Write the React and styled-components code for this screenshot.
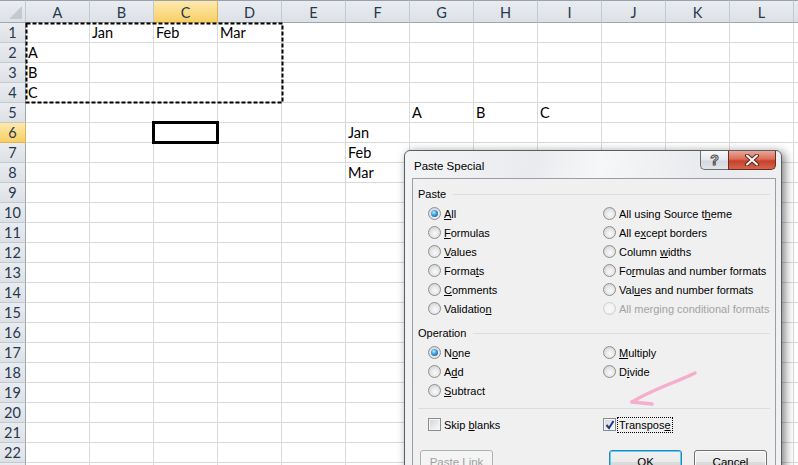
import React from 'react';
import styled, { createGlobalStyle, css } from 'styled-components';

const GlobalStyle = createGlobalStyle`
  html, body { margin: 0; padding: 0; background: #fff; }
  body { width: 798px; height: 465px; overflow: hidden; }
`;

const COLS = ['A', 'B', 'C', 'D', 'E', 'F', 'G', 'H', 'I', 'J', 'K', 'L', 'M'];
const ROW_COUNT = 23;

const cells = {
    B1: 'Jan', C1: 'Feb', D1: 'Mar',
    A2: 'A', A3: 'B', A4: 'C',
    G5: 'A', H5: 'B', I5: 'C',
    F6: 'Jan', F7: 'Feb', F8: 'Mar',
};

const Page = styled.div`
    position: relative;
    width: 798px;
    height: 465px;
    overflow: hidden;
    background: #fff;
`;

const Sheet = styled.div`
    display: grid;
    grid-template-columns: 26px repeat(13, 64px);
    grid-template-rows: 23px repeat(${ROW_COUNT}, 20px);
    font-family: Lato, "Liberation Sans", sans-serif;
    font-size: 14.5px;
    color: #000;
`;

const headBase = css`
    box-sizing: border-box;
    background: linear-gradient(#e9ecf0, #dde1e6);
    color: #27384d;
    border-right: 1px solid #c3c8cf;
    border-bottom: 1px solid #c3c8cf;
    text-align: center;
    overflow: hidden;
`;

const activeHead = css`
    background: linear-gradient(#fde9ad, #f8cf67);
    border-right-color: #e2b552;
    border-bottom-color: #e2b552;
`;

const Corner = styled.div`
    ${headBase};
    position: relative;
    border-top: 1px solid #9aa1a9;
    border-bottom-color: #9ea6b0;
    &::after {
        content: '';
        position: absolute;
        right: 3px;
        bottom: 3px;
        width: 0;
        height: 0;
        border-left: 13px solid transparent;
        border-bottom: 13px solid #c4c9cf;
    }
`;

const ColHead = styled.div`
    ${headBase};
    border-top: 1px solid #9aa1a9;
    border-bottom-color: #9ea6b0;
    line-height: 21px;
    padding-top: 1px;
    ${(p) => p.$active && activeHead};
`;

const RowHead = styled.div`
    ${headBase};
    line-height: 19px;
    border-right-color: #9ea6b0;
    ${(p) => p.$active && activeHead};
`;

const Cell = styled.div`
    box-sizing: border-box;
    border-right: 1px solid #d9d9d9;
    border-bottom: 1px solid #d9d9d9;
    line-height: 19px;
    padding-left: 2px;
    white-space: nowrap;
    overflow: hidden;
`;

const Marquee = styled.svg`
    position: absolute;
    left: 25px;
    top: 22px;
`;

const ActiveCell = styled.div`
    position: absolute;
    left: 152px;
    top: 121px;
    width: 67px;
    height: 23px;
    box-sizing: border-box;
    border: 3px solid #000;
`;

/* ---- dialog ---- */

const Dialog = styled.div`
    position: absolute;
    left: 404px;
    top: 150px;
    width: 378px;
    height: 340px;
    box-sizing: border-box;
    border: 1px solid #5a5d62;
    border-radius: 6px 6px 0 0;
    background: linear-gradient(100deg, #f3f4f6 0%, #e9ebee 30%, #f6f7f8 45%, #e8eaed 70%, #f1f2f4 100%);
    box-shadow: 3px 2px 10px rgba(0, 0, 0, 0.5);
    padding: 0 5px 0 7px;
    font-family: "Liberation Sans", Arial, sans-serif;
    font-size: 11px;
    color: #000;
`;

const TitleBar = styled.div`
    display: flex;
    justify-content: space-between;
    align-items: flex-start;
    height: 27px;
`;

const Title = styled.div`
    font-size: 11.5px;
    padding: 9px 0 0 2px;
`;

const Caption = styled.div`
    display: flex;
`;

const CaptionButton = styled.div`
    box-sizing: border-box;
    height: 19px;
    display: flex;
    align-items: center;
    justify-content: center;
    border: 1px solid #6b6e73;
    border-top: none;
    ${(p) => p.$close ? css`
        width: 48px;
        border-radius: 0 0 5px 0;
        border-color: #6e2b20;
        background: linear-gradient(#e9a799 0%, #dc6d58 45%, #c7412a 55%, #d3644d 100%);
    ` : css`
        width: 28px;
        border-right: none;
        border-radius: 0 0 0 5px;
        background: linear-gradient(#f8f9fa 0%, #e6e8ec 50%, #d4d8de 55%, #e2e5e9 100%);
    `}
`;

const HelpGlyph = styled.span`
    font-family: "Liberation Sans", sans-serif;
    font-weight: bold;
    font-size: 14px;
    color: #fff;
    -webkit-text-stroke: 1px #4a4d52;
    line-height: 1;
`;

const Client = styled.div`
    box-sizing: border-box;
    height: 320px;
    border: 1px solid #9b9fa5;
    border-bottom: none;
    background: #f0f0f0;
    padding: 6px 5px 0 5px;
`;

const GroupTitle = styled.div`
    display: flex;
    align-items: center;
    gap: 7px;
    height: 18px;
    margin-top: ${(p) => p.$gap || 0}px;
    &::after {
        content: '';
        flex: 1;
        height: 1px;
        background: #d5dfe5;
    }
`;

const OptionGrid = styled.div`
    display: grid;
    grid-template-columns: 175px 1fr;
    grid-auto-rows: 19px;
    padding-left: 10px;
    margin-top: 1px;
`;

const Option = styled.div`
    display: flex;
    align-items: center;
    gap: 3px;
    grid-column: ${(p) => p.$col};
    grid-row: ${(p) => p.$row};
`;

const Radio = styled.span`
    position: relative;
    box-sizing: border-box;
    width: 13px;
    height: 13px;
    border-radius: 50%;
    border: 1px solid ${(p) => (p.$disabled ? '#cfd0d2' : '#8d8f92')};
    background: ${(p) => (p.$disabled
        ? 'radial-gradient(circle, #f6f6f6 40%, #e6e6e6 100%)'
        : 'radial-gradient(circle at 55% 60%, #fbfbfb 0%, #ececec 35%, #c8c9cb 100%)')};
    ${(p) => p.$checked && css`
        &::after {
            content: '';
            position: absolute;
            left: 2px;
            top: 2px;
            width: 7px;
            height: 7px;
            border-radius: 50%;
            background: radial-gradient(circle at 40% 35%, #b9ecff 0%, #3a9ae0 45%, #0f4d8c 100%);
        }
    `}
`;

const Check = styled.span`
    position: relative;
    box-sizing: border-box;
    width: 13px;
    height: 13px;
    border: 1px solid #8a8c8f;
    background: linear-gradient(135deg, #d2d3d5 0%, #f0f0f0 70%, #ffffff 100%);
    box-shadow: inset 0 0 0 1px #f4f4f4;
    display: flex;
    align-items: center;
    justify-content: center;
`;

const OptLabel = styled.span`
    color: ${(p) => (p.$disabled ? '#a3a3a3' : '#000')};
    white-space: nowrap;
    padding: 1px;
    border: 1px dotted ${(p) => (p.$focus ? '#000' : 'transparent')};
    margin-left: -2px;
    u { text-decoration-thickness: 1px; text-underline-offset: 1px; }
`;

const Rule = styled.div`
    height: 1px;
    background: #d5dfe5;
    margin: 8px 0 0;
`;

const CheckRow = styled(OptionGrid)`
    margin-top: 6px;
`;

const ButtonRow = styled.div`
    display: flex;
    gap: 12px;
    padding: 0 3px 0 2px;
    margin-top: 16px;
`;

const Spacer = styled.div`
    flex: 1;
`;

const Button = styled.div`
    box-sizing: border-box;
    width: 73px;
    height: 23px;
    border-radius: 3px;
    display: flex;
    align-items: center;
    justify-content: center;
    font-size: 11.5px;
    ${(p) => p.$disabled ? css`
        border: 1px solid #adb2b5;
        background: #f4f4f4;
        color: #a0a0a0;
    ` : css`
        border: 1px solid ${p.$default ? '#3c7fb1' : '#707070'};
        background: linear-gradient(#f2f2f2 0%, #ebebeb 50%, #dddddd 51%, #cfcfcf 100%);
        box-shadow: inset 0 0 0 1px ${p.$default ? '#48d5fb' : '#fcfcfc'};
        color: #000;
    `}
`;

const Arrow = styled.svg`
    position: absolute;
    left: 625px;
    top: 364px;
    pointer-events: none;
`;

const left = [
    [<><u>A</u>ll</>, true],
    [<><u>F</u>ormulas</>],
    [<><u>V</u>alues</>],
    [<>Forma<u>t</u>s</>],
    [<><u>C</u>omments</>],
    [<>Validatio<u>n</u></>],
];

const right = [
    [<>All using Source t<u>h</u>eme</>],
    [<>All e<u>x</u>cept borders</>],
    [<>Column <u>w</u>idths</>],
    [<>Fo<u>r</u>mulas and number formats</>],
    [<>Val<u>u</u>es and number formats</>],
    [<>All merging conditional formats</>, false, true],
];

const opLeft = [
    [<>N<u>o</u>ne</>, true],
    [<>A<u>d</u>d</>],
    [<><u>S</u>ubtract</>],
];

const opRight = [
    [<><u>M</u>ultiply</>],
    [<>D<u>i</u>vide</>],
];

function Options({ list, col }) {
    return list.map(([label, checked, disabled], i) => (
        <Option key={col + '-' + i} $col={col} $row={i + 1}>
            <Radio $checked={checked} $disabled={disabled} />
            <OptLabel $disabled={disabled}>{label}</OptLabel>
        </Option>
    ));
}

function App() {
    const rows = [];
    rows.push(<Corner key="corner" />);
    COLS.forEach((c) => rows.push(<ColHead key={'h' + c} $active={c === 'C'}>{c === 'M' ? '' : c}</ColHead>));
    for (let r = 1; r <= ROW_COUNT; r++) {
        rows.push(<RowHead key={'r' + r} $active={r === 6}>{r === ROW_COUNT ? '' : r}</RowHead>);
        COLS.forEach((c) => rows.push(<Cell key={c + r}>{cells[c + r] || ''}</Cell>));
    }

    return (
        <Page>
            <GlobalStyle />
            <Sheet>{rows}</Sheet>

            <Marquee width="260" height="84">
                <rect x="1.5" y="1.5" width="256" height="79" fill="none" stroke="#000" strokeWidth="2" strokeDasharray="4 2" />
            </Marquee>
            <ActiveCell />

            <Dialog>
                <TitleBar>
                    <Title>Paste Special</Title>
                    <Caption>
                        <CaptionButton>
                            <HelpGlyph>?</HelpGlyph>
                        </CaptionButton>
                        <CaptionButton $close>
                            <svg width="16" height="12" viewBox="0 0 16 12">
                                <path d="M3 1.5 L13 10.5 M13 1.5 L3 10.5" stroke="#5b2219" strokeWidth="4" strokeLinecap="round" />
                                <path d="M3 1.5 L13 10.5 M13 1.5 L3 10.5" stroke="#fff" strokeWidth="2" strokeLinecap="round" />
                            </svg>
                        </CaptionButton>
                    </Caption>
                </TitleBar>

                <Client>
                    <GroupTitle>Paste</GroupTitle>
                    <OptionGrid>
                        <Options list={left} col={1} />
                        <Options list={right} col={2} />
                    </OptionGrid>

                    <GroupTitle $gap={6}>Operation</GroupTitle>
                    <OptionGrid>
                        <Options list={opLeft} col={1} />
                        <Options list={opRight} col={2} />
                    </OptionGrid>

                    <Rule />

                    <CheckRow>
                        <Option $col={1} $row={1}>
                            <Check />
                            <OptLabel>Skip <u>b</u>lanks</OptLabel>
                        </Option>
                        <Option $col={2} $row={1}>
                            <Check>
                                <svg width="10" height="10" viewBox="0 0 10 10">
                                    <path d="M1.5 5 L4 8 L8.5 1" fill="none" stroke="#1f3a8a" strokeWidth="2" />
                                </svg>
                            </Check>
                            <OptLabel $focus>Transpos<u>e</u></OptLabel>
                        </Option>
                    </CheckRow>

                    <ButtonRow>
                        <Button $disabled><span>Paste Link</span></Button>
                        <Spacer />
                        <Button $default>OK</Button>
                        <Button>Cancel</Button>
                    </ButtonRow>
                </Client>
            </Dialog>

            <Arrow width="80" height="45" viewBox="0 0 80 45">
                <path d="M70 9 C62 13 52 17 42 21 C30 26 18 31 7 38" fill="none" stroke="#f5aecb" strokeWidth="3.5" strokeLinecap="round" />
                <path d="M7 38 L27 40" fill="none" stroke="#f5aecb" strokeWidth="3.5" strokeLinecap="round" />
            </Arrow>
        </Page>
    );
}

export default App;
